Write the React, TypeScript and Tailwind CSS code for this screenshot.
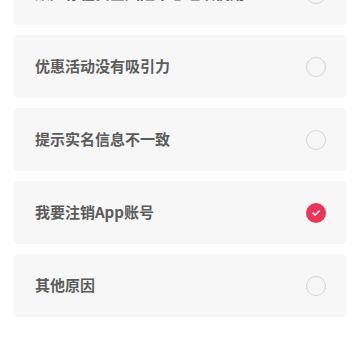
import React, { useState } from 'react';

const reasons = [
  '账户存在安全风险不想继续使用',
  '优惠活动没有吸引力',
  '提示实名信息不一致',
  '我要注销App账号',
  '其他原因',
];

const Radio = ({ checked }: { checked: boolean }) =>
  checked ? (
    <span className="flex h-[20px] w-[20px] items-center justify-center rounded-full bg-[#e8365b]">
      <svg viewBox="0 0 12 12" className="h-[10px] w-[10px]" fill="none">
        <path d="M2.5 6.2 L5 8.5 L9.5 3.8" stroke="#fff" strokeWidth="1.8" strokeLinecap="round" strokeLinejoin="round" />
      </svg>
    </span>
  ) : (
    <span className="h-[20px] w-[20px] rounded-full border-[1.5px] border-[#d6d6d6] bg-[#f7f7f7]" />
  );

export default function App() {
  const [selected, setSelected] = useState(3);

  return (
    <div
      className="h-[360px] w-[360px] overflow-hidden bg-white"
      style={{ fontFamily: '"Noto Sans CJK SC", "Noto Sans", sans-serif' }}
    >
      <div className="-mt-[38px] flex flex-col gap-[10px] px-[14px]">
        {reasons.map((r, i) => (
          <button
            key={r}
            onClick={() => setSelected(i)}
            className="flex h-[63px] items-center justify-between rounded-[4px] bg-[#f7f7f7] pl-[21px] pr-[20px] text-left"
          >
            <span className="text-[15px] font-semibold text-[#5c5c5c]">{r}</span>
            <Radio checked={selected === i} />
          </button>
        ))}
      </div>
    </div>
  );
}
